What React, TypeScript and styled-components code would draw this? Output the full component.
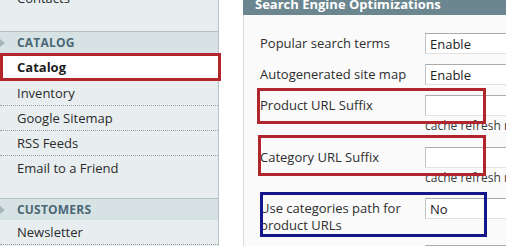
import React from 'react';
import styled, { createGlobalStyle } from 'styled-components';

const Global = createGlobalStyle`
  html, body { margin: 0; padding: 0; background: #fff; }
  body {
    width: 524px; height: 246px; overflow: hidden;
    font-family: "Open Sans", "Noto Sans", "DejaVu Sans", sans-serif;
    color: #2e2e2e;
  }
`;

const Page = styled.div`
  display: flex;
  width: 524px;
  height: 246px;
  overflow: hidden;
  background: #fff;
`;

const Sidebar = styled.nav`
  width: 218px;
  flex: none;
  margin-top: -14px;
  background: #e8eef0;
  border-right: 1px solid #b9c3c6;
  display: flex;
  flex-direction: column;
`;

const Group = styled.div<{ $pad?: number }>`
  padding-bottom: ${(p) => p.$pad ?? 17}px;
`;

const GroupHeader = styled.div`
  position: relative;
  height: 21px;
  border-top: 1px solid #b3bfc3;
  background: #d7e2e5;
  display: flex;
  align-items: center;
  padding-left: 17px;
  font-size: 12px;
  font-weight: 700;
  color: #4a6875;
  letter-spacing: 0.2px;
  &::before {
    content: '';
    position: absolute;
    left: 0;
    top: 7px;
    border-left: 5px solid #a7b4b8;
    border-top: 4px solid transparent;
    border-bottom: 4px solid transparent;
  }
`;

const Item = styled.div<{ $last?: boolean }>`
  height: 24px;
  display: flex;
  align-items: center;
  padding-left: 17px;
  font-size: 13px;
  color: #2b2b2b;
  border-bottom: 1px dotted ${(p) => (p.$last ? 'transparent' : '#98a3a7')};
  white-space: nowrap;
`;

const ActiveItem = styled.div`
  box-sizing: border-box;
  height: 28px;
  margin-right: -3px;
  position: relative;
  z-index: 1;
  display: flex;
  align-items: center;
  padding-left: 14px;
  background: #fff;
  border: 3px solid #b3262c;
  font-size: 13px;
  font-weight: 700;
  color: #1e1e1e;
`;

const Main = styled.main`
  flex: 1;
  padding-left: 24px;
  display: flex;
  align-items: flex-start;
`;

const Panel = styled.section`
  width: 263px;
  height: 246px;
  overflow: hidden;
  display: flex;
  flex-direction: column;
`;

const PanelHeader = styled.div`
  flex: none;
  height: 23px;
  margin-top: -8px;
  background: #6b868f;
  color: #fff;
  font-size: 13px;
  font-weight: 700;
  display: flex;
  align-items: center;
  padding-left: 12px;
  white-space: nowrap;
`;

const PanelBody = styled.div`
  flex: 1;
  background: #fafafa;
  border-left: 1px solid #d9d9d9;
  padding-top: 18px;
  display: flex;
  flex-direction: column;
`;

const Row = styled.div<{ $gap: number }>`
  position: relative;
  display: grid;
  grid-template-columns: 165px 110px;
  padding-left: 16px;
  padding-bottom: ${(p) => p.$gap}px;
`;

const Label = styled.div`
  font-size: 13px;
  line-height: 17px;
  padding-top: 2px;
  color: #2e2e2e;
  white-space: nowrap;
`;

const Value = styled.div`
  display: flex;
  flex-direction: column;
`;

const Field = styled.div`
  box-sizing: border-box;
  height: 21px;
  width: 110px;
  background: #fff;
  border-top: 1px solid #ababab;
  border-left: 1px solid #c2c2c2;
  border-bottom: 1px solid #e2e2e2;
  display: flex;
  align-items: center;
  padding-left: 4px;
  font-size: 13px;
  color: #222;
`;

const Note = styled.div`
  margin-top: 2px;
  font-size: 12px;
  line-height: 16px;
  color: #3a3a3a;
  white-space: nowrap;
`;

const Mark = styled.div<{ $color: string }>`
  position: absolute;
  box-sizing: border-box;
  border: 3px solid ${(p) => p.$color};
  pointer-events: none;
  z-index: 2;
`;

type Ann = { color: string; top: number; left: number; width: number; height: number };

const rows: { label: string[]; value: string; note?: string; gap: number; ann?: Ann }[] = [
  { label: ['Popular search terms'], value: 'Enable', gap: 10 },
  { label: ['Autogenerated site map'], value: 'Enable', gap: 10 },
  {
    label: ['Product URL Suffix'], value: '', note: 'cache refresh needed', gap: 13,
    ann: { color: '#b1262d', top: -7, left: 13, width: 229, height: 36 },
  },
  {
    label: ['Category URL Suffix'], value: '', note: 'cache refresh needed', gap: 12,
    ann: { color: '#b1262d', top: -12, left: 14, width: 228, height: 41 },
  },
  {
    label: ['Use categories path for', 'product URLs'], value: 'No', gap: 11,
    ann: { color: '#15168a', top: -6, left: 16, width: 227, height: 45 },
  },
  { label: [''], value: '', gap: 0 },
];

export default function App() {
  return (
    <>
      <Global />
      <Page>
        <Sidebar>
          <Group $pad={20}>
            <Item $last>Contacts</Item>
          </Group>
          <Group>
            <GroupHeader>CATALOG</GroupHeader>
            <ActiveItem>Catalog</ActiveItem>
            <Item>Inventory</Item>
            <Item>Google Sitemap</Item>
            <Item>RSS Feeds</Item>
            <Item $last>Email to a Friend</Item>
          </Group>
          <Group>
            <GroupHeader>CUSTOMERS</GroupHeader>
            <Item>Newsletter</Item>
          </Group>
        </Sidebar>
        <Main>
          <Panel>
            <PanelHeader>Search Engine Optimizations</PanelHeader>
            <PanelBody>
              {rows.map((r, i) => (
                <Row key={i} $gap={r.gap}>
                  <Label>
                    {r.label.map((l, j) => (
                      <div key={j}>{l}</div>
                    ))}
                  </Label>
                  <Value>
                    <Field>{r.value}</Field>
                    {r.note && <Note>{r.note}</Note>}
                  </Value>
                  {r.ann && (
                    <Mark
                      $color={r.ann.color}
                      style={{ top: r.ann.top, left: r.ann.left, width: r.ann.width, height: r.ann.height }}
                    />
                  )}
                </Row>
              ))}
            </PanelBody>
          </Panel>
        </Main>
      </Page>
    </>
  );
}
